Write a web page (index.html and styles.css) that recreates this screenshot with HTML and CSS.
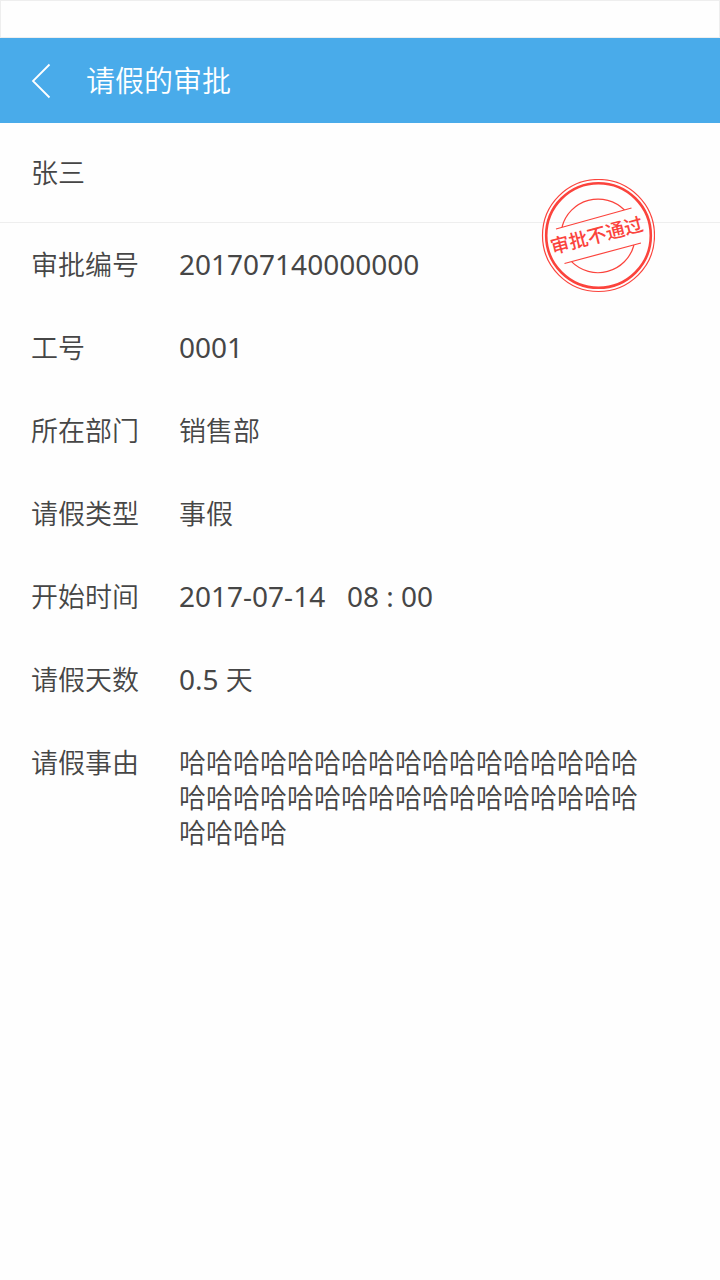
FILE: index.html
```html
<!DOCTYPE html>
<html lang="zh-CN">
<head>
<meta charset="utf-8">
<meta name="viewport" content="width=device-width, initial-scale=1">
<title>请假的审批</title>
<link rel="stylesheet" href="styles.css">
</head>
<body>
<div class="status-bar"></div>
<header class="header">
  <button class="back" type="button" aria-label="返回">
    <svg width="20" height="36" viewBox="0 0 20 36" fill="none" stroke="currentColor" stroke-width="1.800"><path d="M18.500 1.500 2 18 18.500 34.500"/></svg>
  </button>
  <h1 class="title">请假的审批</h1>
</header>
<main class="content">
  <section class="applicant">张三</section>
  <svg class="stamp" width="114" height="114" viewBox="0 0 114 114" fill="none" stroke="currentColor" role="img" aria-label="审批不通过">
    <circle cx="57.500" cy="56.500" r="56" stroke-width="1.200"/>
    <circle cx="57.500" cy="56.500" r="52.300" stroke-width="2.600"/>
    <path stroke-width="1.200" d="M15 50 90.500 29M23.500 84.500 100 64M21 48A37.300 37.300 0 0 1 83.500 31M30.500 82.700A37.300 37.300 0 0 0 93 66"/>
    <text class="stamp-text" x="56" y="63" text-anchor="middle" transform="rotate(-14.500 57 57)">审批不通过</text>
  </svg>
  <dl class="details">
    <div class="row"><dt>审批编号</dt><dd class="number">201707140000000</dd></div>
    <div class="row"><dt>工号</dt><dd class="number">0001</dd></div>
    <div class="row"><dt>所在部门</dt><dd>销售部</dd></div>
    <div class="row"><dt>请假类型</dt><dd>事假</dd></div>
    <div class="row"><dt>开始时间</dt><dd class="number">2017-07-14&nbsp;&nbsp; 08 : 00</dd></div>
    <div class="row"><dt>请假天数</dt><dd class="number">0.5 <span class="unit">天</span></dd></div>
    <div class="row"><dt>请假事由</dt><dd>哈哈哈哈哈哈哈哈哈哈哈哈哈哈哈哈哈哈哈哈哈哈哈哈哈哈哈哈哈哈哈哈哈哈哈哈哈哈</dd></div>
  </dl>
</main>
</body>
</html>
```
FILE: styles.css
```css
* {
  box-sizing: border-box;
}

body {
  margin: 0;
  min-height: 100vh;
  background: #fefefe;
  color: #464646;
  font-family: "Noto Sans", "Noto Sans CJK SC", sans-serif;
  font-size: 27px;
  font-weight: 350;
  line-height: 35px;
}

.status-bar {
  height: 38px;
  border: 1px solid #eee;
}

.header {
  display: flex;
  align-items: center;
  gap: 35px;
  height: 85px;
  padding: 0 31px;
  background: #49abea;
  color: #fff;
}

.back {
  display: flex;
  padding: 0;
  border: 0;
  background: none;
  color: inherit;
  cursor: pointer;
}

.title {
  margin: 0;
  font-size: 29px;
  font-weight: 350;
}

.content {
  position: relative;
}

.applicant {
  padding: 32px 31px;
  border-bottom: 1px solid #eee;
}

.stamp {
  position: absolute;
  top: 56px;
  right: 65px;
  color: #fb433c;
}

.stamp-text {
  fill: currentColor;
  stroke: none;
  font-family: "Noto Sans CJK SC", sans-serif;
  font-size: 19px;
  font-weight: 500;
}

.details {
  display: flex;
  flex-direction: column;
  gap: 48px;
  margin: 0;
  padding: 24px 72px 24px 31px;
}

.row {
  display: grid;
  grid-template-columns: 148px 1fr;
}

dd {
  margin: 0;
  overflow-wrap: anywhere;
}

.number {
  font-size: 28px;
  font-weight: 400;
}

.unit {
  font-size: 27px;
  font-weight: 350;
}
```
